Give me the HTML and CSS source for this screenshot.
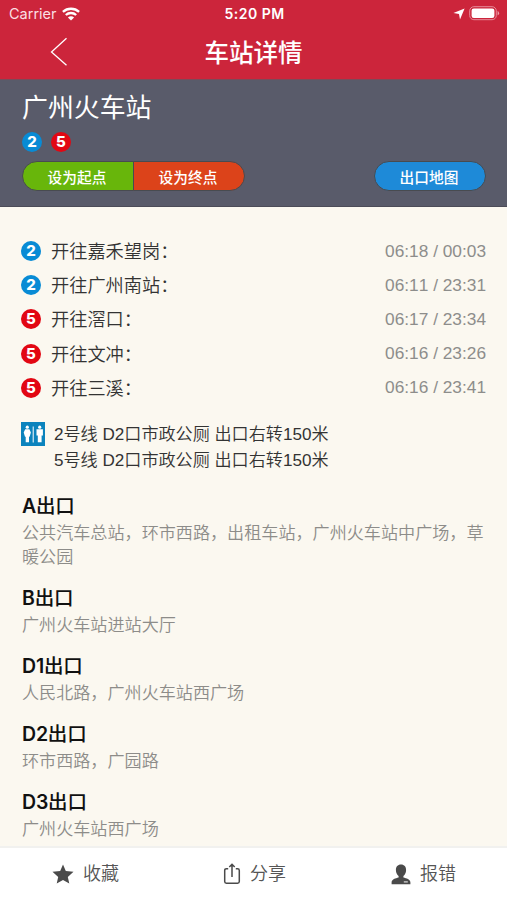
FILE: index.html
```html
<!DOCTYPE html>
<html lang="zh-CN">
<head>
<meta charset="utf-8">
<title>车站详情</title>
<link rel="stylesheet" href="styles.css">
</head>
<body>
<div class="app">
  <header class="top">
    <div class="status">
      <div class="carrier"><span>Carrier</span>
        <svg width="18" height="14" viewBox="0 0 18 14" fill="none" stroke="#fff" stroke-width="2.3"><path d="M.9 4.9C5.5.7 12.5.7 17.1 4.9M3.8 8c3-2.7 7.400-2.700 10.400 0"/><path d="M9 13.600 5.900 10.400c1.700-1.500 4.500-1.500 6.200 0z" fill="#fff" stroke="none"/></svg>
      </div>
      <div class="clock">5:20 PM</div>
      <div class="power">
        <svg width="12" height="12" viewBox="0 0 12 12" fill="#fff"><path d="M11.600.4 7 11.600 6 6 .4 5z"/></svg>
        <svg width="31" height="15" viewBox="0 0 31 15"><rect x=".7" y=".7" width="26.600" height="13" rx="4.200" fill="none" stroke="#e58b99"/><rect x="2.600" y="2.500" width="22.800" height="9.400" rx="2.200" fill="#fff"/><path d="M28.600 4.800q3 2.400 0 4.800z" fill="#eba0ab"/></svg>
      </div>
    </div>
    <div class="nav">
      <svg class="back" width="18" height="30" viewBox="0 0 18 30" fill="none" stroke="#fff" stroke-width="1.300"><path d="M16.500 1.300 1.500 15l15 13.300"/></svg>
      <h1>车站详情</h1>
    </div>
  </header>
  <section class="station">
    <h2>广州火车站</h2>
    <div class="badges"><span class="num blue">2</span><span class="num red">5</span></div>
    <div class="actions">
      <div class="pair"><button class="start">设为起点</button><button class="end">设为终点</button></div>
      <button class="map">出口地图</button>
    </div>
  </section>
  <main>
    <ul class="lines">
      <li><span class="num blue">2</span><span class="dir">开往嘉禾望岗：</span><span class="time">06:18 / 00:03</span></li>
      <li><span class="num blue">2</span><span class="dir">开往广州南站：</span><span class="time">06:11 / 23:31</span></li>
      <li><span class="num red">5</span><span class="dir">开往滘口：</span><span class="time">06:17 / 23:34</span></li>
      <li><span class="num red">5</span><span class="dir">开往文冲：</span><span class="time">06:16 / 23:26</span></li>
      <li><span class="num red">5</span><span class="dir">开往三溪：</span><span class="time">06:16 / 23:41</span></li>
    </ul>
    <div class="toilet">
      <svg width="24" height="24" viewBox="0 0 24 24"><path fill="#0b83bd" d="M0 0h24v24H0z"/><g fill="#fff"><circle cx="6.300" cy="5.200" r="1.600"/><path d="M4.200 7.200h4.200l1.500 3.300-1.300 4.200H8v5.500H4.700v-5.500H4L2.700 10.500z"/><path d="M11.700 4.500h1v16h-1z"/><circle cx="18.700" cy="5.200" r="1.600"/><path d="M15.500 7.200h6.400v6.300h-1.300v6.700h-3.800v-6.700h-1.300z"/></g></svg>
      <div class="places"><p>2号线 D2口市政公厕 出口右转150米</p><p>5号线 D2口市政公厕 出口右转150米</p></div>
    </div>
    <div class="exits">
      <section><h3><b>A</b>出口</h3><p>公共汽车总站，环市西路，出租车站，广州火车站中广场，草暖公园</p></section>
      <section><h3><b>B</b>出口</h3><p>广州火车站进站大厅</p></section>
      <section><h3><b>D1</b>出口</h3><p>人民北路，广州火车站西广场</p></section>
      <section><h3><b>D2</b>出口</h3><p>环市西路，广园路</p></section>
      <section><h3><b>D3</b>出口</h3><p>广州火车站西广场</p></section>
    </div>
  </main>
  <footer>
    <div class="tab"><svg width="22" height="20" viewBox="0 0 22 20" fill="#4a4a4a"><path d="m11 .4 2.800 6.500 7.700.8-5.700 5.200 1.500 6.700L11 16l-6.300 3.600 1.500-6.700L.5 7.700l7.700-.8z"/></svg><span>收藏</span></div>
    <div class="tab"><svg width="18" height="22" viewBox="0 0 18 22" fill="none" stroke="#4a4a4a" stroke-width="1.500"><path d="M5.200 5.700H3.400Q1.700 5.700 1.700 7.400v11.200q0 1.700 1.700 1.700h11.200q1.700 0 1.700-1.700V7.400q0-1.700-1.700-1.700h-1.800M9 14V1.500M6.300 4 9 1.300 11.700 4"/></svg><span>分享</span></div>
    <div class="tab"><svg width="20" height="21" viewBox="0 0 20 21" fill="#4a4a4a"><path d="M10 .5c3.300 0 5.100 2.300 5.100 5.400 0 2.600-1.200 4.900-2.700 6.100v1.500c3 1 7 1.500 7 5v1.700H.6v-1.700c0-3.500 4-4 7-5V12C6.100 10.800 4.900 8.500 4.900 5.900 4.900 2.800 6.700.5 10 .5z"/><path d="M12.800 17.300h4v1.200h-4z" fill="#ddd"/></svg><span>报错</span></div>
  </footer>
</div>
</body>
</html>
```
FILE: styles.css
```css
* { box-sizing: border-box; }
body, h1, h2, h3, p, ul { margin: 0; padding: 0; }
body { font-family: "Liberation Sans", "Noto Sans CJK SC", sans-serif; background: #fbf8f0; }
.app { width: 507px; height: 900px; display: flex; flex-direction: column; overflow: hidden; }
svg { display: block; flex: none; }
.top { height: 79px; flex: none; background: #cc253b; color: #fff; }
.status { height: 27px; padding: 0 7px 0 9px; display: grid; grid-template-columns: 1fr auto 1fr; align-items: center; font-family: Inter, sans-serif; font-size: 14.5px; }
.carrier { display: flex; align-items: center; gap: 5px; color: #fbdfe3; }
.clock { font-weight: 600; font-size: 14px; letter-spacing: .5px; }
.power { display: flex; justify-content: flex-end; align-items: center; gap: 4px; }
.nav { height: 52px; display: grid; grid-template-columns: 1fr auto 1fr; align-items: center; padding-bottom: 2px; }
.back { margin-left: 50px; }
.nav h1 { font-size: 24.5px; font-weight: 500; line-height: 36px; padding-top: 3px; }
.station { height: 128px; flex: none; background: #595b6a; border-top: 1px solid #7c4a59; border-bottom: 1px solid #4c4c58; padding: 9px 21px 0 22px; color: #fff; }
.station h2 { font-size: 25.9px; font-weight: 400; line-height: 39px; }
.badges { display: flex; gap: 9px; margin-top: 4px; }
.num { width: 20px; height: 20px; border-radius: 50%; flex: none; color: #fff; font: 800 15px/20px Inter, sans-serif; text-align: center; }
.blue { background: #088bd5; }
.red { background: #e20713; }
.actions { display: flex; justify-content: space-between; margin-top: 9px; }
.pair { display: flex; }
button { appearance: none; width: 112px; height: 30px; padding: 0 2px 0 0; border: 1px solid #484b50; color: #fff; font: 500 14.7px/27px "Noto Sans CJK SC", sans-serif; }
.start { background: #68b60b; border-radius: 15px 0 0 15px; }
.end { margin-left: -1px; background: #dc431a; border-radius: 0 15px 15px 0; }
.map { border-radius: 15px; background: #1e8ad8; }
main { flex: 1; min-height: 0; overflow: hidden; padding: 27px 21px 0; }
.lines { list-style: none; }
.lines li { display: flex; align-items: center; height: 34.2px; font-size: 18.200px; color: #333; }
.dir { margin-left: 10px; flex: 1; font-weight: 350; padding-bottom: 2px; }
.time { font-size: 17.300px; color: #8d8d8b; font-kerning: none; }
.toilet { display: flex; gap: 9px; margin-top: 17px; font-size: 17.1px; color: #333; line-height: 26.500px; font-weight: 350; }
.exits { margin-top: 15px; padding-left: 1px; }
.exits section { margin-bottom: 12px; }
.exits h3 { color: #111; font: 500 19.500px/33px Inter, "Noto Sans CJK SC", sans-serif; letter-spacing: -.2px; }
.exits b { font-weight: 600; }
.exits p { margin-top: -1px; color: #8d8c89; font-size: 17.1px; font-weight: 350; line-height: 24px; }
footer { height: 54px; flex: none; background: #fff; border-top: 2px solid #f1f1ef; display: grid; grid-template-columns: repeat(3, 1fr); }
.tab { display: flex; align-items: center; justify-content: center; gap: 9px; padding-left: 2px; font-size: 18px; color: #555; font-weight: 350; }
.tab span { padding-bottom: 4px; }
```
